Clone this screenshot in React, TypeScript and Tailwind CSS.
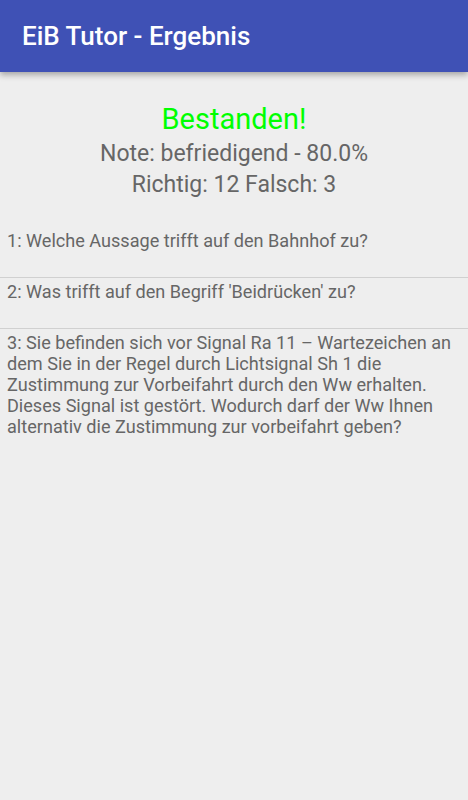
export default function App() {
  const items = [
    "1: Welche Aussage trifft auf den Bahnhof zu?",
    "2: Was trifft auf den Begriff 'Beidrücken' zu?",
    "3: Sie befinden sich vor Signal Ra 11 – Wartezeichen an dem Sie in der Regel durch Lichtsignal Sh 1 die Zustimmung zur Vorbeifahrt durch den Ww erhalten. Dieses Signal ist gestört. Wodurch darf der Ww Ihnen alternativ die Zustimmung zur vorbeifahrt geben?",
  ];

  return (
    <div className="min-h-[800px] w-full bg-[#eeeeee] font-['Roboto',sans-serif]">
      <header className="relative z-10 flex h-[72px] items-center bg-[#3f51b5] px-[22px] shadow-[0_3px_6px_rgba(0,0,0,0.3)]">
        <h1 className="text-[26px] font-medium text-white">EiB Tutor - Ergebnis</h1>
      </header>

      <div className="flex flex-col items-center pt-[28px]">
        <div className="text-[29px] leading-[38px] text-[#00ff00]">Bestanden!</div>
        <div className="text-[23px] leading-[31px] text-[#666666]">Note: befriedigend - 80.0%</div>
        <div className="text-[23px] leading-[31px] text-[#666666]">Richtig: 12 Falsch: 3</div>
      </div>

      <ul className="mt-[27px]">
        {items.map((q, i) => (
          <li
            key={i}
            className={
              i < items.length - 1
                ? "min-h-[51px] border-b border-[#d0d0d0] px-[7px] pt-[3px] text-[18.1px] leading-[21px] text-[#666666]"
                : "min-h-[51px] px-[7px] pt-[3px] text-[18.1px] leading-[21px] text-[#666666]"
            }
          >
            {q}
          </li>
        ))}
      </ul>
    </div>
  );
}
